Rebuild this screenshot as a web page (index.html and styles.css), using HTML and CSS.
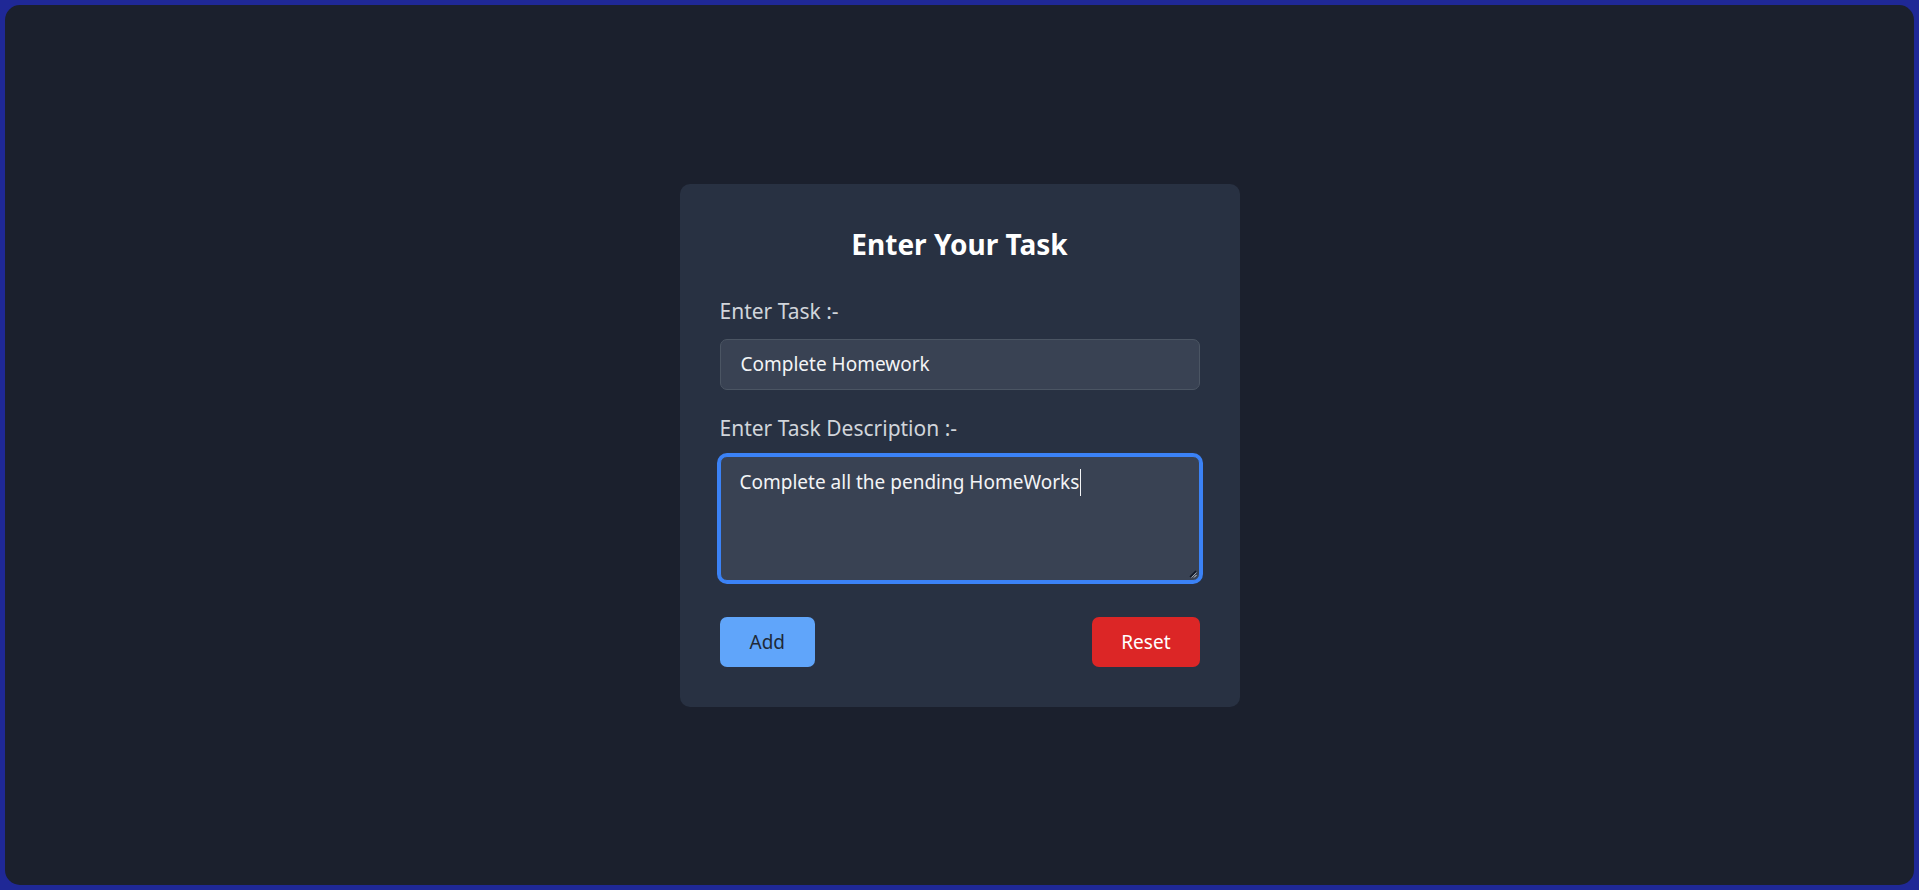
FILE: index.html
```html
<!DOCTYPE html>
<html lang="en">
<head>
<meta charset="utf-8">
<title>Enter Your Task</title>
<link rel="stylesheet" href="styles.css">
</head>
<body>
<div class="frame">
  <main class="screen">
    <form class="card">
      <h1 class="title">Enter Your Task</h1>
      <label class="label" for="task">Enter Task :-</label>
      <input class="field" id="task" type="text" value="Complete Homework">
      <label class="label label-desc">Enter Task Description :-</label>
      <div class="area" role="textbox" aria-multiline="true">
        <span class="area-text">Complete all the pending HomeWorks</span><span class="caret"></span>
        <svg class="grip" width="8" height="8" viewBox="0 0 8 8" aria-hidden="true">
          <path d="M1 7 L7 1" stroke="#111827" stroke-width="1.6"/>
          <path d="M2.5 7.5 L7.5 2.5" stroke="#9ca3af" stroke-width="1"/>
          <path d="M5 7.5 L7.5 5" stroke="#d1d5db" stroke-width="1"/>
        </svg>
      </div>
      <div class="actions">
        <button class="btn btn-add" type="button">Add</button>
        <button class="btn btn-reset" type="button">Reset</button>
      </div>
    </form>
  </main>
</div>
</body>
</html>
```

FILE: styles.css
```css
html, body {
  margin: 0;
  padding: 0;
  height: 100%;
}

body {
  background: #1f2896;
  font-family: "Noto Sans", "Open Sans", sans-serif;
}

.frame {
  box-sizing: border-box;
  height: 100%;
  padding: 5px;
}

.screen {
  height: 100%;
  background: #1b202d;
  border-radius: 15px;
  display: flex;
  align-items: center;
  justify-content: center;
}

.card {
  box-sizing: border-box;
  width: 560px;
  padding: 40px;
  background: #283142;
  border-radius: 10px;
  display: flex;
  flex-direction: column;
}

.title {
  margin: 0 0 30px;
  font-size: 28px;
  line-height: 40px;
  font-weight: 700;
  color: #ffffff;
  text-align: center;
}

.label {
  display: block;
  font-size: 21px;
  line-height: 35px;
  color: #d1d5db;
  margin-bottom: 10px;
}

.field {
  box-sizing: border-box;
  width: 100%;
  height: 51px;
  margin: 0 0 21px;
  padding: 0 20px;
  background: #394253;
  border: 1px solid #4b5563;
  border-radius: 7px;
  color: #f3f4f6;
  font-family: inherit;
  font-size: 19px;
  outline: none;
}

.area {
  position: relative;
  box-sizing: border-box;
  height: 125px;
  padding: 10px 19px;
  background: #394253;
  border: 1.5px solid #3b82f6;
  border-radius: 7px;
  box-shadow: 0 0 0 3px #3b82f6;
  color: #f3f4f6;
  font-size: 19px;
  line-height: 30px;
}

.caret {
  display: inline-block;
  width: 1px;
  height: 27px;
  margin-left: 1px;
  vertical-align: -7px;
  background: #f3f4f6;
}

.grip {
  position: absolute;
  right: 2px;
  bottom: 2px;
}

.actions {
  margin-top: 36px;
  display: flex;
  justify-content: space-between;
}

.btn {
  height: 50px;
  padding: 0 30px;
  border: none;
  border-radius: 7px;
  font-family: inherit;
  font-size: 19px;
  cursor: pointer;
}

.btn-add {
  background: #60a5fa;
  color: #1f2937;
}

.btn-reset {
  padding: 0 29px;
  background: #dc2626;
  color: #ffffff;
}
```
